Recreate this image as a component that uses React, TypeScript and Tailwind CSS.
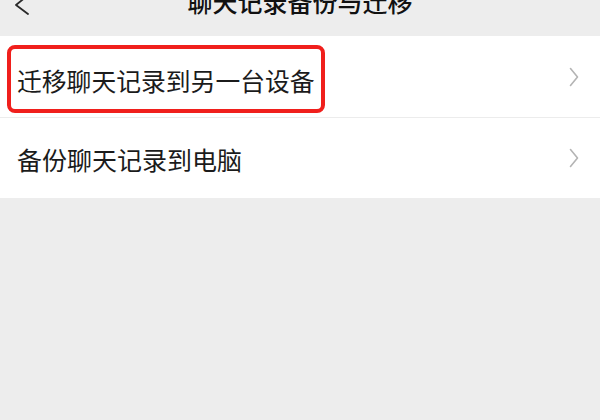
import React from 'react';

const font = { fontFamily: '"Noto Sans CJK SC", "Noto Sans", sans-serif' };

const Chevron = () => (
  <svg width="10" height="20" viewBox="0 0 10 20" fill="none">
    <polyline points="1.5,1.5 8.5,10 1.5,18.5" stroke="#b4b4b4" strokeWidth="1.6" strokeLinecap="round" strokeLinejoin="round" />
  </svg>
);

export default function App() {
  return (
    <div className="w-full h-[420px] bg-[#ededed] text-[#1b1b1b] overflow-hidden" style={font}>
      {/* 标题栏 */}
      <div className="h-[36px] grid grid-cols-[1fr_auto_1fr] items-start overflow-hidden">
        <div className="pl-[14px]">
          <svg width="16" height="16" viewBox="0 0 16 16" fill="none">
            <polyline points="13,-4 2,5 14,14" stroke="#2a2a2a" strokeWidth="1.8" strokeLinecap="round" strokeLinejoin="round" />
          </svg>
        </div>
        <div className="-mt-[11px] text-[25px] leading-[25px] font-medium text-[#111] whitespace-nowrap">聊天记录备份与迁移</div>
        <div />
      </div>

      {/* 列表 */}
      <div className="bg-white">
        <div className="h-[81px] flex items-start justify-between pl-[7px] pr-[21px]">
          <div className="mt-[9px] h-[68px] border-[4px] border-[#f01f1c] rounded-[8px] flex items-center px-[6px]">
            <span className="text-[24.8px] leading-none whitespace-nowrap mt-[2px]">迁移聊天记录到另一台设备</span>
          </div>
          <div className="self-center">
            <Chevron />
          </div>
        </div>
        <div className="h-px bg-[#ececec]" />
        <div className="h-[80px] flex items-center justify-between pl-[17px] pr-[21px]">
          <span className="text-[25px] leading-none mt-[3px] whitespace-nowrap">备份聊天记录到电脑</span>
          <Chevron />
        </div>
      </div>
    </div>
  );
}
